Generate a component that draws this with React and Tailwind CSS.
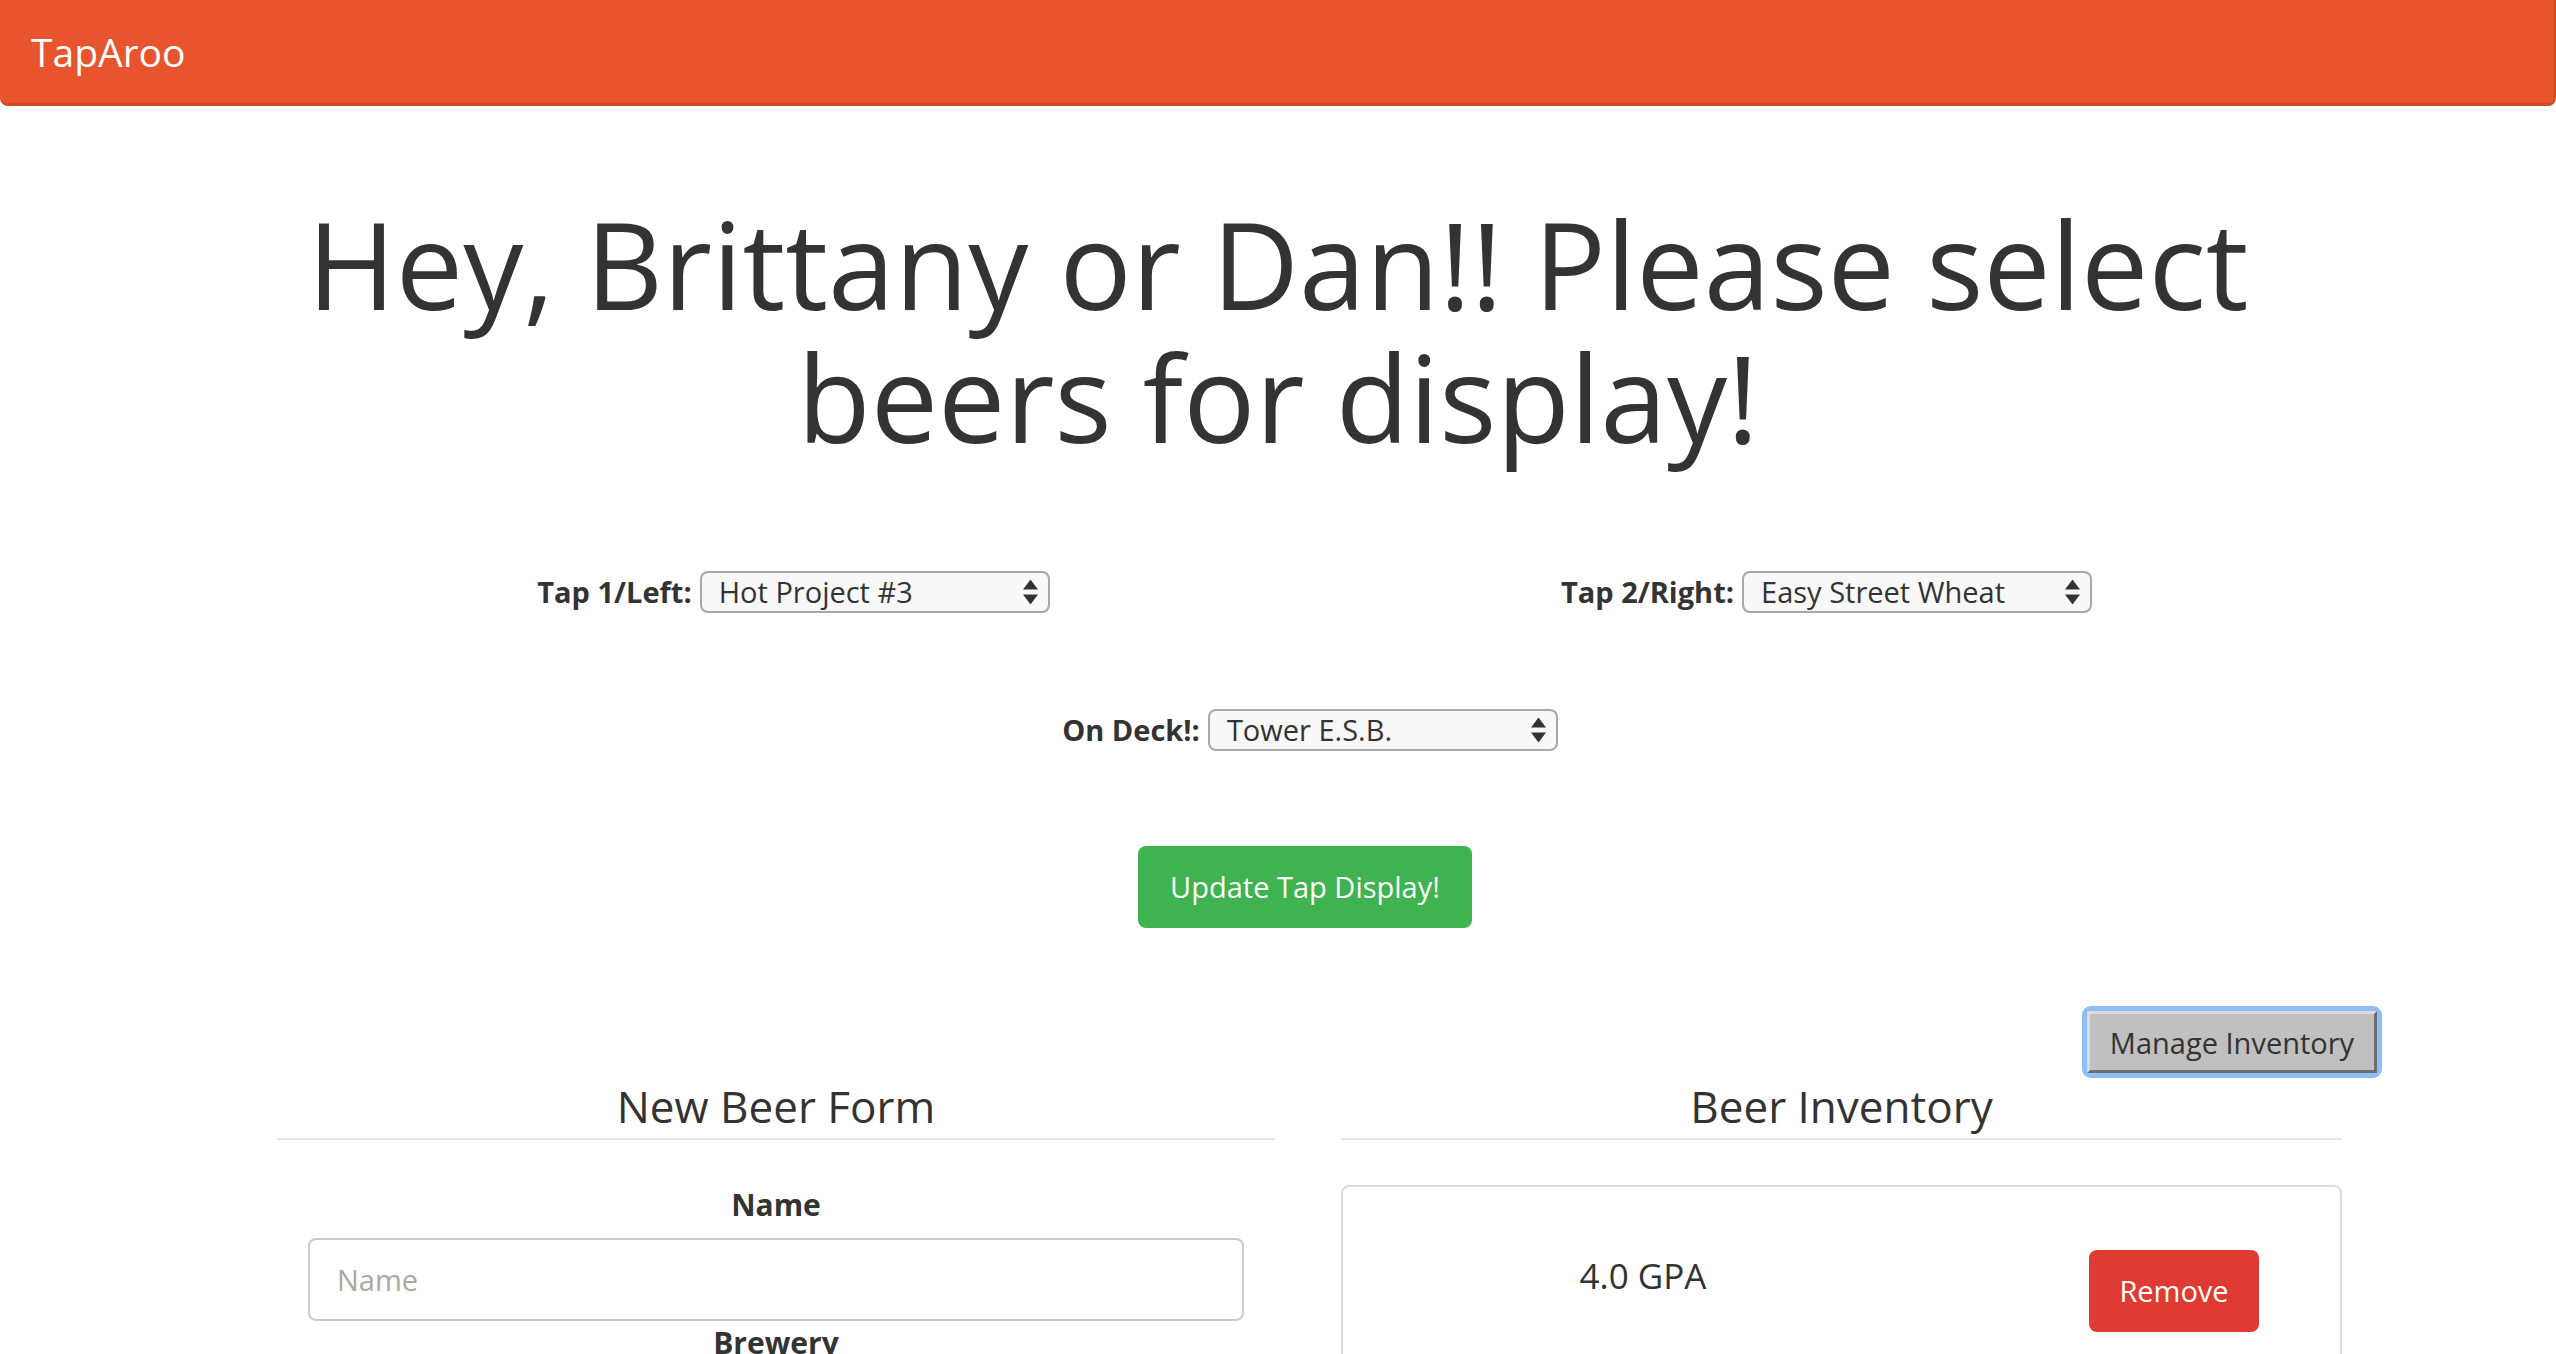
import React from "react";

const beers = ["Hot Project #3", "Easy Street Wheat", "Tower E.S.B.", "4.0 GPA"];

const SelectArrows = () => (
  <svg
    width="15"
    height="25"
    viewBox="0 0 15 25"
    className="pointer-events-none absolute right-[12px] top-1/2 -translate-y-1/2"
  >
    <path d="M7.5 0 L15 10 L0 10 Z" fill="#333" />
    <path d="M0 15 L15 15 L7.5 25 Z" fill="#333" />
  </svg>
);

const TapSelect = ({ label, value }) => (
  <div className="flex items-center gap-[8px]">
    <label className="text-[29px] font-bold leading-[42px] text-[#333]">{label}</label>
    <div className="relative">
      <select
        defaultValue={value}
        className="h-[42px] w-[350px] appearance-none rounded-[8px] border-2 border-[#a8a8a8] bg-[#f8f8f8] pl-[17px] pr-[40px] text-[29px] leading-[36px] text-[#333] outline-none"
      >
        {beers.map((b) => (
          <option key={b} value={b}>
            {b}
          </option>
        ))}
      </select>
      <SelectArrows />
    </div>
  </div>
);

const App = () => {
  return (
    <div className="h-[1354px] overflow-hidden bg-white font-['Open_Sans',sans-serif] text-[#333]">
      {/* Navbar */}
      <nav className="flex h-[106px] items-center rounded-b-[8px] border-r-2 border-b-[3px] border-[#d04a24] bg-[#e8542d] pl-[31px]">
        <span className="text-[39px] leading-none text-white">TapAroo</span>
      </nav>

      {/* Jumbotron heading */}
      <h1 className="mx-auto mt-[91px] max-w-[2200px] text-center text-[120px] font-normal leading-[133px] text-[#333]">
        Hey, Brittany or Dan!! Please select beers for display!
      </h1>

      <div className="ml-[277px] w-[2066px]">
        {/* Tap selects */}
        <div className="mt-[108px] flex h-[42px]">
          <div className="flex w-1/2 justify-center">
            <TapSelect label="Tap 1/Left:" value="Hot Project #3" />
          </div>
          <div className="flex w-1/2 justify-center">
            <TapSelect label="Tap 2/Right:" value="Easy Street Wheat" />
          </div>
        </div>

        <div className="mt-[96px] flex h-[42px] justify-center">
          <TapSelect label="On Deck!:" value="Tower E.S.B." />
        </div>

        <div className="mt-[95px] flex justify-center pr-[10px]">
          <button className="h-[82px] w-[334px] rounded-[8px] bg-[#3eb350] text-[29px] text-white">
            Update Tap Display!
          </button>
        </div>
      </div>

      {/* Manage inventory */}
      <div className="mt-[78px] flex justify-end pr-[174px]">
        <div className="rounded-[9px] bg-[#8fbdf6] p-[5px]">
          <button className="h-[62px] w-[290px] border-[3px] border-t-[#dadada] border-l-[#dadada] border-r-[#6e6e6e] border-b-[#6e6e6e] bg-[#c0c0c0] text-[29px] leading-none text-[#333]">
            Manage Inventory
          </button>
        </div>
      </div>

      {/* Form + inventory */}
      <div className="ml-[277px] mt-[3px] flex w-[2066px]">
        <div className="w-[998px]">
          <h3 className="border-b-2 border-[#e6e6e6] pb-[7px] text-center text-[44px] font-normal leading-[50px]">
            New Beer Form
          </h3>
          <div className="mt-[45px] text-center text-[30px] font-bold leading-[40px]">Name</div>
          <div className="mt-[13px] px-[31px]">
            <input
              type="text"
              placeholder="Name"
              className="h-[83px] w-full rounded-[8px] border-2 border-[#cccccc] bg-white px-[27px] text-[29px] text-[#333] outline-none placeholder:text-[#aea79f]"
            />
          </div>
          <div className="mt-[2px] text-center text-[30px] font-bold leading-[40px]">Brewery</div>
        </div>

        <div className="ml-[66px] w-[1001px]">
          <h3 className="border-b-2 border-[#e6e6e6] pb-[7px] text-center text-[44px] font-normal leading-[50px]">
            Beer Inventory
          </h3>
          <div className="mt-[45px] h-[400px] rounded-[8px] border-2 border-[#dddddd]">
            <div className="flex items-start">
              <div className="mt-[68px] w-[600px] text-center text-[35px] leading-[42px]">4.0 GPA</div>
              <button className="ml-auto mr-[81px] mt-[63px] h-[82px] w-[170px] rounded-[8px] bg-[#df3a33] text-[29px] text-white">
                Remove
              </button>
            </div>
          </div>
        </div>
      </div>
    </div>
  );
};

export default App;
